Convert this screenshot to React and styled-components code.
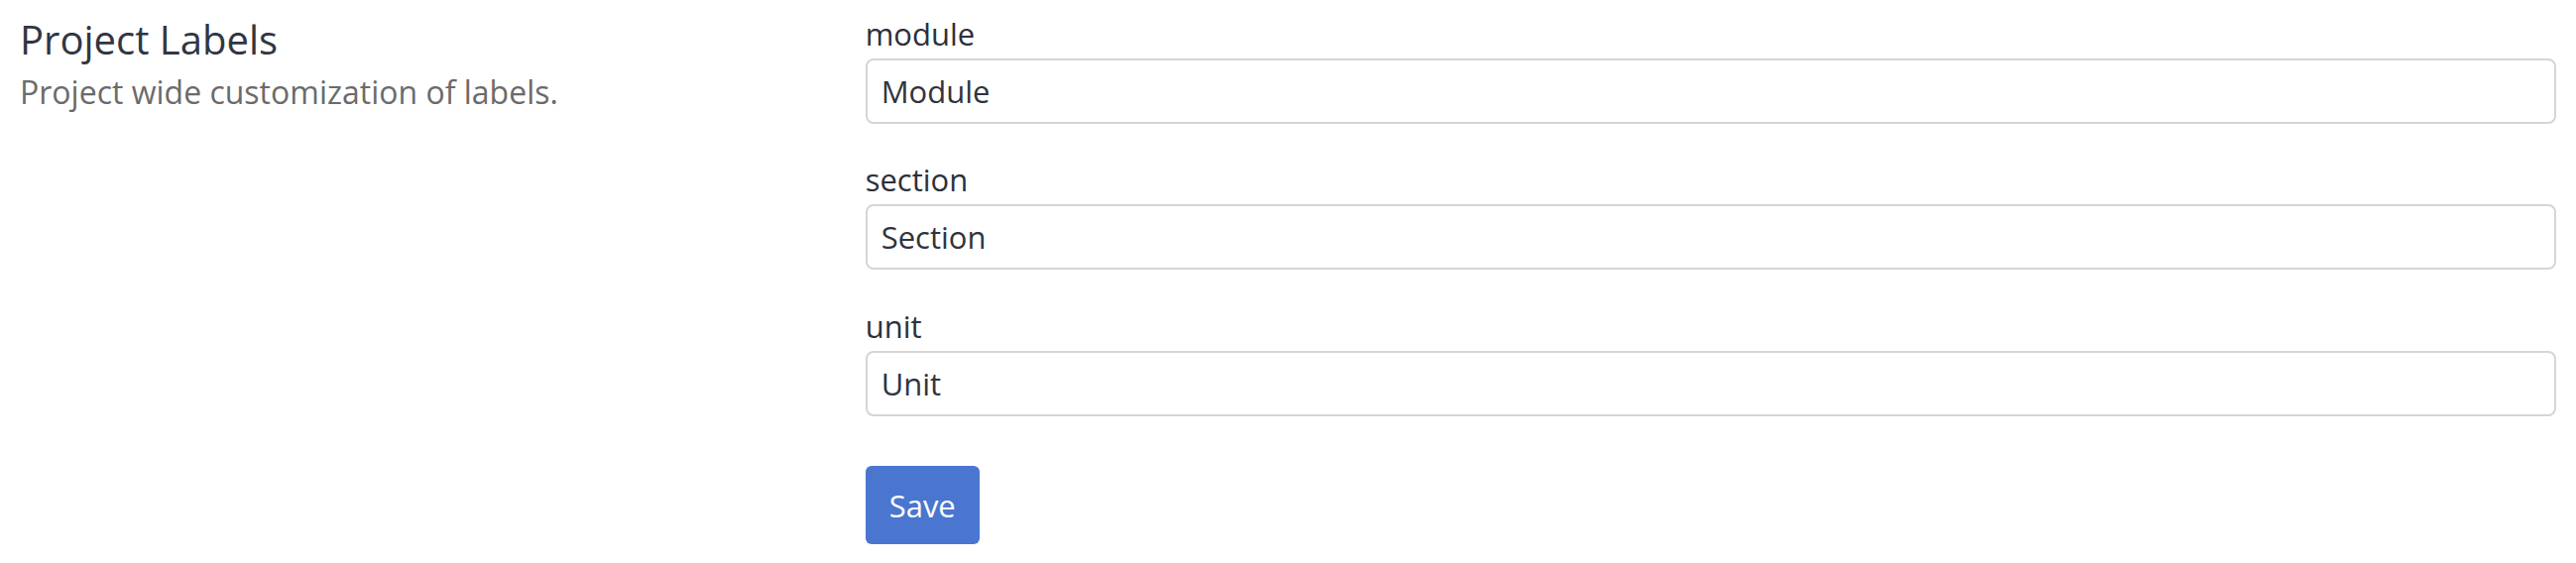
import React from 'react';
import styled, { createGlobalStyle } from 'styled-components';

const GlobalStyle = createGlobalStyle`
  html, body {
    margin: 0;
    padding: 0;
    background: #ffffff;
  }

  body {
    font-family: 'Open Sans', 'Noto Sans', sans-serif;
    color: #2f3440;
  }
`;

const fields = [
  { name: 'module', value: 'Module' },
  { name: 'section', value: 'Section' },
  { name: 'unit', value: 'Unit' }
];

function App() {
  return (
    <>
      <GlobalStyle />
      <Page>
        <Intro>
          <Title>Project Labels</Title>
          <Description>Project wide customization of labels.</Description>
        </Intro>
        <Form onSubmit={e => e.preventDefault()}>
          {fields.map(field => (
            <Field key={field.name}>
              <Label htmlFor={field.name}>{field.name}</Label>
              <Input id={field.name} defaultValue={field.value} />
            </Field>
          ))}
          <Actions>
            <SaveButton type='submit'>Save</SaveButton>
          </Actions>
        </Form>
      </Page>
    </>
  );
}

export default App;

const Page = styled.div`
  display: grid;
  grid-template-columns: 1fr 2fr;
  padding: 11.5px 20px 0;
`;

const Intro = styled.div`
  padding-top: 4px;
`;

const Title = styled.h2`
  margin: 0 0 6px;
  font-size: 40px;
  line-height: 48px;
  font-weight: 400;
  color: #313643;
`;

const Description = styled.p`
  margin: 0;
  font-size: 32px;
  line-height: 46px;
  color: #6b6b6b;
`;

const Form = styled.form`
  display: flex;
  flex-direction: column;
`;

const Field = styled.div`
  display: flex;
  flex-direction: column;
  margin-bottom: 34.5px;
`;

const Label = styled.label`
  font-size: 31px;
  line-height: 45px;
  margin-bottom: 2px;
  color: #2c303b;
`;

const Input = styled.input`
  box-sizing: border-box;
  height: 66px;
  width: 100%;
  padding: 0 14px;
  border: 2px solid #d5d5d5;
  border-radius: 8px;
  font-family: inherit;
  font-size: 31px;
  color: #2f3440;
  background: #ffffff;
  outline: none;
`;

const Actions = styled.div`
  margin-top: 16px;
`;

const SaveButton = styled.button`
  height: 79px;
  padding: 0 24px;
  border: none;
  border-radius: 6px;
  background: #4a76cf;
  color: #ffffff;
  font-family: inherit;
  font-size: 31px;
  cursor: pointer;
`;
